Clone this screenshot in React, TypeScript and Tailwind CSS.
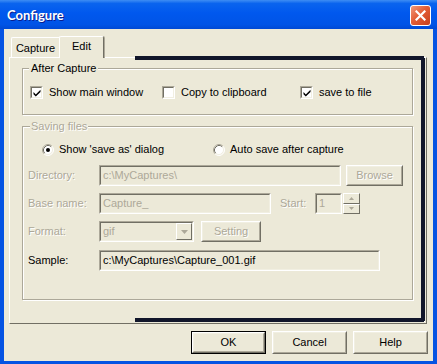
import React from 'react';

const raised = "border border-t-white border-l-white border-r-[#716F64] border-b-[#716F64]";
const raisedIn = "border border-t-[#F1EFE2] border-l-[#F1EFE2] border-r-[#ACA899] border-b-[#ACA899]";
const sunken = "border border-t-[#ACA899] border-l-[#ACA899] border-r-white border-b-white";
const sunkenIn = "border border-t-[#716F64] border-l-[#716F64] border-r-[#F1EFE2] border-b-[#F1EFE2]";
const dis = "text-[#ACA899] [text-shadow:1px_1px_0_#fff]";
const etched = "border border-[#ACA899] shadow-[inset_1px_1px_0_#fff,1px_1px_0_#fff]";

function Btn({t,w,d,def}:{t:string;w:string;d?:boolean;def?:boolean}){
  const inner = <div className={`${raised} h-full w-full`}><div className={`${raisedIn} h-full w-full flex items-center justify-center ${d?dis:'text-black'}`}>{t}</div></div>;
  return def
    ? <div className={`${w} h-full border border-black`}>{inner}</div>
    : <div className={`${w} h-full`}>{inner}</div>;
}

function Field({w,t,d}:{w:string;t:string;d?:boolean}){
  return <div className={`${sunken} ${w} h-full`}><div className={`${sunkenIn} h-full w-full flex items-center pl-[2px] ${d?'text-[#ACA899]':'text-black'}`}>{t}</div></div>;
}

function Check({t,w}:{t:string;w?:string}){
  const on = t!=='Copy to clipboard';
  return <div className={`flex items-center gap-[6px] ${w??''}`}>
    <div className={`${sunken} w-[13px] h-[13px]`}><div className={`${sunkenIn} w-full h-full bg-white flex items-center justify-center`}>
      {on && <svg width="8" height="8" viewBox="0 0 8 8"><path d="M0.5 3 L2.8 5.6 L7.5 0.8 L7.5 3 L2.8 7.6 L0.5 5.2 Z" fill="#000"/></svg>}
    </div></div>
    <span>{t}</span>
  </div>;
}

function Radio({t,on,w}:{t:string;on?:boolean;w?:string}){
  return <div className={`flex items-center gap-[5px] ${w??''}`}>
    <svg width="12" height="12" viewBox="0 0 12 12">
      <circle cx="6" cy="6" r="5" fill="#fff"/>
      <path d="M2.11 9.89 A5.5 5.5 0 0 1 9.89 2.11" fill="none" stroke="#ACA899"/>
      <path d="M9.89 2.11 A5.5 5.5 0 0 1 2.11 9.89" fill="none" stroke="#fff"/>
      <path d="M2.82 9.18 A4.5 4.5 0 0 1 9.18 2.82" fill="none" stroke="#716F64"/>
      <path d="M9.18 2.82 A4.5 4.5 0 0 1 2.82 9.18" fill="none" stroke="#F1EFE2"/>
      {on && <circle cx="6" cy="6" r="2" fill="#000"/>}
    </svg>
    <span>{t}</span>
  </div>;
}

function Tri({up}:{up?:boolean}){
  return <svg width="5" height="3" viewBox="0 0 5 3"><polygon points={up?"2.5,0 5,3 0,3":"0,0 5,0 2.5,3"} fill="#ACA899"/></svg>;
}

export default function App(){
  return <div className="w-[437px] h-[364px] flex flex-col bg-[#0553E3] text-[11px] leading-none" style={{fontFamily:'"Liberation Sans", Arial, sans-serif'}}>
    <div className="h-[29px] shrink-0 flex items-center justify-between pl-[7px] pr-[6px] bg-[linear-gradient(to_bottom,#3E8DF3_0%,#0A64EE_12%,#0058EE_45%,#0054E6_85%,#0049D4_100%)]">
      <span className="text-white font-bold text-[13px] pt-[1px] [text-shadow:1px_1px_0_#0A1E8F]" style={{fontFamily:'Lato, "Noto Sans", sans-serif'}}>Configure</span>
      <div className="w-[21px] h-[21px] mt-[2px] rounded-[3px] border border-white bg-[linear-gradient(135deg,#F09A7C_0%,#E35D36_45%,#C8401C_100%)] flex items-center justify-center">
        <svg width="11" height="11" viewBox="0 0 11 11"><path d="M1.5 1.5 L9.5 9.5 M9.5 1.5 L1.5 9.5" stroke="#fff" strokeWidth="2.2" strokeLinecap="square"/></svg>
      </div>
    </div>
    <div className="flex-1 mx-[4px] mb-[3px] bg-[#ECE9D8] flex flex-col text-black">
      <div className="flex items-end pt-[7px] pl-[7px] h-[28px] shrink-0">
        <div className="h-[20px] w-[48px] border-t border-l border-white rounded-tl-[2px] flex items-center justify-center pt-[1px]">Capture</div>
        <div className="relative z-10 h-[22px] -mb-px w-[45px] bg-[#ECE9D8] border-t border-l border-white border-r border-r-[#716F64] rounded-t-[2px] shadow-[1px_0_0_#ACA899] flex items-start justify-center pt-[4px]">Edit</div>
      </div>
      <div className={`relative ml-[5px] w-[418px] h-[267px] shrink-0 ${raised}`}>
        <div className="absolute left-[125px] right-[2px] -top-[2px] h-[4px] bg-[#11162A]"/>
        <div className="absolute right-[1px] top-0 bottom-[1px] w-[4px] bg-[#11162A]"/>
        <div className="absolute left-[125px] right-[1px] bottom-[1px] h-[4px] bg-[#11162A]"/>
        <div className="absolute right-[1px] bottom-[1px] w-px h-px bg-white"/>

        <div className={`relative mt-[10px] ml-[12px] w-[391px] h-[47px] ${etched} pt-[17px] pl-[7px]`}>
          <span className="absolute -top-[6px] left-[6px] px-[2px] bg-[#ECE9D8]">After Capture</span>
          <div className="flex items-center h-[13px]">
            <Check t="Show main window" w="w-[132px]"/>
            <Check t="Copy to clipboard" w="w-[138px]"/>
            <Check t="save to file"/>
          </div>
        </div>

        <div className={`relative mt-[11px] ml-[12px] w-[391px] h-[174px] ${etched} pt-[16px] pl-[5px]`}>
          <span className={`absolute -top-[6px] left-[7px] px-[1px] bg-[#ECE9D8] ${dis}`}>Saving files</span>
          <div className="flex items-center h-[13px] pl-[14px]">
            <Radio t="Show 'save as' dialog" on w="w-[171px]"/>
            <Radio t="Auto save after capture"/>
          </div>
          <div className="flex items-center h-[21px] mt-[9px]">
            <span className={`w-[71px] ${dis}`}>Directory:</span>
            <Field w="w-[242px]" t="c:\MyCaptures\" d/>
            <div className="ml-[5px] h-full"><Btn t="Browse" w="w-[57px]" d/></div>
          </div>
          <div className="flex items-center h-[21px] mt-[7px]">
            <span className={`w-[71px] ${dis}`}>Base name:</span>
            <Field w="w-[172px]" t="Capture_" d/>
            <span className={`ml-[9px] w-[35px] ${dis}`}>Start:</span>
            <Field w="w-[27px]" t="1" d/>
            <div className="ml-[1px] w-[17px] h-full flex flex-col">
              <div className={`${raised} flex-1 flex items-center justify-center`}><Tri up/></div>
              <div className={`${raised} flex-1 flex items-center justify-center`}><Tri/></div>
            </div>
          </div>
          <div className="flex items-center h-[21px] mt-[7px]">
            <span className={`w-[71px] ${dis}`}>Format:</span>
            <div className={`${sunken} w-[95px] h-full`}><div className={`${sunkenIn} h-full w-full flex items-center justify-between pl-[2px] text-[#ACA899]`}>
              <span>gif</span>
              <div className={`${raised} w-[16px] h-full flex items-center justify-center`}>
                <svg width="7" height="4" viewBox="0 0 7 4"><polygon points="0,0 7,0 3.5,4" fill="#ACA899"/></svg>
              </div>
            </div></div>
            <div className="ml-[7px] h-full"><Btn t="Setting" w="w-[60px]" d/></div>
          </div>
          <div className="flex items-center h-[21px] mt-[8px]">
            <span className="w-[71px]">Sample:</span>
            <Field w="w-[281px]" t="c:\MyCaptures\Capture_001.gif"/>
          </div>
        </div>
      </div>
      <div className="flex justify-end gap-[6px] pr-[5px] mt-[7px] h-[23px]">
        <Btn t="OK" w="w-[75px]" def/>
        <Btn t="Cancel" w="w-[75px]"/>
        <Btn t="Help" w="w-[75px]"/>
      </div>
    </div>
  </div>;
}
